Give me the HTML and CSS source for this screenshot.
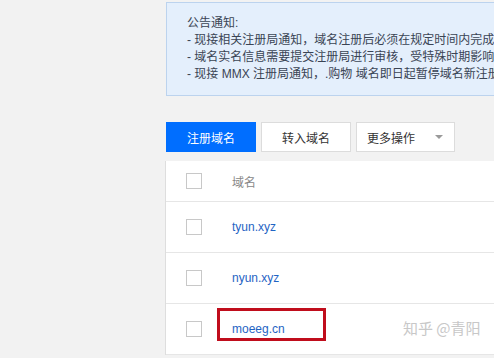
FILE: index.html
```html
<!DOCTYPE html>
<html lang="zh-CN">
<head>
<meta charset="utf-8">
<title>域名管理</title>
<link rel="stylesheet" href="styles.css">
</head>
<body>
<div class="page">
  <div class="content">
    <div class="notice">
      <p>公告通知:</p>
      <p>- 现接相关注册局通知，域名注册后必须在规定时间内完成实名认证，否则域名将被暂停解析</p>
      <p>- 域名实名信息需要提交注册局进行审核，受特殊时期影响，审核时间可能延长</p>
      <p>- 现接 MMX 注册局通知，.购物 域名即日起暂停域名新注册</p>
    </div>
    <div class="toolbar">
      <button class="btn btn-primary">注册域名</button>
      <button class="btn">转入域名</button>
      <button class="btn btn-drop">更多操作<span class="caret"></span></button>
    </div>
    <div class="table">
      <div class="row head">
        <span class="cb"></span>
        <span class="cell th">域名</span>
      </div>
      <div class="row">
        <span class="cb"></span>
        <span class="cell"><a class="link">tyun.xyz</a></span>
      </div>
      <div class="row">
        <span class="cb"></span>
        <span class="cell"><a class="link">nyun.xyz</a></span>
      </div>
      <div class="row">
        <span class="cb"></span>
        <span class="cell mark"><a class="link">moeeg.cn</a><span class="redbox"></span></span>
        <span class="watermark">知乎 @青阳</span>
      </div>
    </div>
  </div>
</div>
</body>
</html>
```

FILE: styles.css
```css
html, body {
  margin: 0;
  padding: 0;
  background: #f2f2f2;
  overflow: hidden;
  font-family: "Liberation Sans", "Noto Sans CJK SC", sans-serif;
  font-size: 12px;
}
.page {
  width: 494px;
  height: 358px;
  overflow: hidden;
}
.content {
  margin-left: 166px;
  width: 700px;
  padding-top: 2px;
}
.notice {
  height: 68px;
  padding: 12px 19px 12px 20px;
  background: #e4effc;
  border: 1px solid #bcd3ee;
  color: #3a4454;
  white-space: nowrap;
  overflow: hidden;
}
.notice p {
  margin: 0;
  line-height: 17px;
}
.toolbar {
  display: flex;
  gap: 5px;
  margin-top: 26px;
  height: 30px;
}
.btn {
  height: 30px;
  width: 90px;
  border: 1px solid #dcdcdc;
  background: #fff;
  color: #333;
  font-family: "Liberation Sans", "Noto Sans CJK SC", sans-serif;
  font-size: 12px;
  padding: 0;
}
.btn-primary {
  background: #006eff;
  border-color: #006eff;
  color: #fff;
}
.btn-drop {
  width: 99px;
  display: flex;
  align-items: center;
  padding-left: 10px;
  text-align: left;
}
.caret {
  margin-left: 20px;
  width: 0;
  height: 0;
  border-left: 4px solid transparent;
  border-right: 4px solid transparent;
  border-top: 4px solid #9a9a9a;
}
.table {
  margin-top: 9px;
  background: #fff;
  border-left: 1px solid #dedede;
  margin-left: -1px;
}
.row {
  position: relative;
  display: flex;
  align-items: center;
  height: 50px;
  border-bottom: 1px solid #e6e6e6;
}
.row.head {
  height: 40px;
}
.cb {
  width: 14px;
  height: 14px;
  border: 1px solid #c8c8c8;
  background: #fff;
  margin-left: 20px;
  flex: none;
}
.cell {
  margin-left: 30px;
}
.th {
  color: #888;
}
.link {
  color: #1f64c4;
  text-decoration: none;
}
.mark {
  position: relative;
}
.redbox {
  position: absolute;
  left: -15px;
  top: -14px;
  width: 103px;
  height: 27px;
  border: 3px solid #c00d1c;
}
.watermark {
  position: absolute;
  left: 237px;
  top: 15px;
  font-family: "Noto Sans CJK SC", sans-serif;
  font-size: 15px;
  line-height: 18px;
  color: #c8c8c8;
}
```
